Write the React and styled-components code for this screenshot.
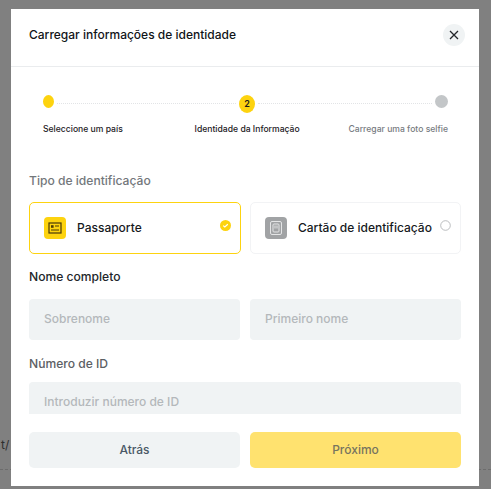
import React from "react";
import styled, { createGlobalStyle } from "styled-components";

const Global = createGlobalStyle`
  html, body { margin: 0; padding: 0; background: #808080; }
  body { font-family: Inter, "Liberation Sans", sans-serif; }
`;

const Page = styled.div`
  position: relative;
  width: 491px;
  height: 489px;
  overflow: hidden;
  background: #808080;
`;
const BehindText = styled.div`
  padding: 437px 0 0 1px;
  font-size: 12px;
  line-height: 16px;
  color: #2e2e2e;
`;
const BehindRule = styled.div`
  margin-top: 16px;
  border-top: 1px dashed #6c6c6c;
`;
const Modal = styled.div`
  position: absolute;
  left: 11px;
  top: 9px;
  width: 468px;
  height: 477px;
  display: flex;
  flex-direction: column;
  background: #fff;
`;
const Header = styled.header`
  height: 58px;
  flex: none;
  box-sizing: border-box;
  display: flex;
  align-items: center;
  justify-content: space-between;
  padding: 0 14px 0 18px;
  border-bottom: 1px solid #eaecee;
`;
const Title = styled.h1`
  margin: 0 0 6px;
  font-size: 12px;
  line-height: 18px;
  font-weight: 500;
  color: #111418;
`;
const CloseButton = styled.button`
  width: 22px;
  height: 22px;
  padding: 0;
  border: 0;
  border-radius: 50%;
  background: #f0f3f4;
  display: flex;
  align-items: center;
  justify-content: center;
  margin-bottom: 5px;
`;
const Body = styled.div`
  height: 347px;
  flex: none;
  overflow: hidden;
  padding: 0 18px;
`;
const Stepper = styled.div`
  height: 79px;
  padding: 28px 13px 0 14px;
  box-sizing: border-box;
`;
const Track = styled.div`
  display: flex;
  align-items: flex-start;
  height: 18px;
`;
const Dot = styled.span`
  flex: none;
  width: ${(p) => p.$w}px;
  height: ${(p) => p.$h}px;
  border-radius: 50%;
  background: ${(p) => p.$color};
  color: #1b1b1b;
  font-size: 9px;
  font-weight: 600;
  line-height: 18px;
  text-align: center;
`;
const Connector = styled.span`
  flex: none;
  width: ${(p) => p.$w}px;
  margin: 8px 3px 0;
  border-top: 1px dotted #e2e4e6;
`;
const StepLabels = styled.div`
  display: flex;
  justify-content: space-between;
  margin-top: 10px;
  font-size: 8.6px;
  line-height: 12px;
  font-weight: 500;
`;
const StepLabel = styled.span`
  color: ${(p) => (p.$muted ? "#777b7f" : "#1d2024")};
  margin-left: ${(p) => p.$shift || 0}px;
`;
const SectionLabel = styled.div`
  font-size: 12.1px;
  line-height: 16px;
  font-weight: 500;
  color: ${(p) => p.$color};
  margin: ${(p) => p.$margin};
`;
const CardRow = styled.div`
  display: grid;
  grid-template-columns: 212px 211px;
  gap: 9px;
`;
const Card = styled.div`
  position: relative;
  box-sizing: border-box;
  height: 52px;
  border-radius: 5px;
  border: 1px solid ${(p) => (p.$active ? "#fdd30f" : "#f2f3f5")};
  display: flex;
  align-items: center;
  gap: ${(p) => p.$gap}px;
  padding-left: 14px;
  font-size: 12px;
  font-weight: 500;
  color: #16191d;
  white-space: nowrap;
`;
const CardText = styled.span`
  margin-bottom: 2px;
`;
const CardIcon = styled.span`
  flex: none;
  width: 22px;
  height: 22px;
  border-radius: 4px;
  background: ${(p) => p.$color};
  display: flex;
  align-items: center;
  justify-content: center;
`;
const Mark = styled.span`
  position: absolute;
  right: ${(p) => p.$right}px;
  top: 17px;
  display: flex;
`;
const FieldRow = styled.div`
  display: grid;
  grid-template-columns: 211px 211px;
  gap: 10px;
`;
const Field = styled.div`
  height: ${(p) => p.$h}px;
  box-sizing: border-box;
  border-radius: 4px;
  background: #f0f3f4;
  padding-left: 15px;
  font-size: 12px;
  font-weight: 500;
  line-height: ${(p) => p.$lh}px;
  color: #b4b8bb;
`;
const Footer = styled.footer`
  display: grid;
  grid-template-columns: 211px 211px;
  gap: 10px;
  padding: 18px 18px 0;
`;
const FooterButton = styled.button`
  height: 36px;
  padding: 0 0 2px;
  border: 0;
  border-radius: 5px;
  font: 500 12px Inter, "Liberation Sans", sans-serif;
  background: ${(p) => (p.$primary ? "#ffe26f" : "#f0f3f4")};
  color: ${(p) => (p.$primary ? "#77745f" : "#4a5866")};
`;

export default function App() {
  return (
    <Page>
      <Global />
      <BehindText>t/</BehindText>
      <BehindRule />
      <Modal>
        <Header>
          <Title>Carregar informações de identidade</Title>
          <CloseButton aria-label="Fechar">
            <svg width="10" height="10" viewBox="0 0 10 10" fill="none" stroke="#23262a" strokeWidth="1.3">
              <path d="M1 1l8 8M9 1L1 9" />
            </svg>
          </CloseButton>
        </Header>
        <Body>
          <Stepper>
            <Track>
              <Dot $w={11} $h={13} $color="#fdd30f" />
              <Connector $w={179} />
              <Dot $w={16} $h={18} $color="#fdd30f">2</Dot>
              <Connector $w={174} />
              <Dot $w={13} $h={13} $color="#c3c6c8" />
            </Track>
            <StepLabels>
              <StepLabel>Seleccione um país</StepLabel>
              <StepLabel $shift={23}>Identidade da Informação</StepLabel>
              <StepLabel $muted>Carregar uma foto selfie</StepLabel>
            </StepLabels>
          </Stepper>
          <SectionLabel $color="#73777b" $margin="27px 0 13px">Tipo de identificação</SectionLabel>
          <CardRow>
            <Card $active $gap={11}>
              <CardIcon $color="#fdd30f">
                <svg width="14" height="12" viewBox="0 0 14 12" fill="none" stroke="#4a3a08" strokeWidth="1.2">
                  <rect x="1" y="1" width="12" height="10" />
                  <rect x="3" y="3.2" width="2.6" height="2.6" fill="#4a3a08" stroke="none" />
                  <path d="M7 4h4M3 8h8" />
                </svg>
              </CardIcon>
              <CardText>Passaporte</CardText>
              <Mark $right={9}>
                <svg width="11" height="11" viewBox="0 0 11 11">
                  <circle cx="5.5" cy="5.5" r="5.5" fill="#fdd30f" />
                  <path d="M3.2 5.6l1.6 1.4 3-2.7" fill="none" stroke="#fff" strokeWidth="1.2" />
                </svg>
              </Mark>
            </Card>
            <Card $gap={11}>
              <CardIcon $color="#a1a3a5">
                <svg width="14" height="16" viewBox="0 0 14 16" fill="none" stroke="#e4e5e6" strokeWidth="1">
                  <rect x="1.5" y="1.5" width="11" height="13" rx="1.5" />
                  <rect x="4" y="4" width="6" height="8" rx="1" />
                  <path d="M6 5.5v3M8 5.5v3" />
                </svg>
              </CardIcon>
              <CardText>Cartão de identificação</CardText>
              <Mark $right={9}>
                <svg width="11" height="11" viewBox="0 0 11 11">
                  <circle cx="5.5" cy="5.5" r="4.8" fill="#fff" stroke="#a9acae" strokeWidth="0.8" />
                </svg>
              </Mark>
            </Card>
          </CardRow>
          <SectionLabel $color="#22262a" $margin="15px 0 14px">Nome completo</SectionLabel>
          <FieldRow>
            <Field $h={41} $lh={39}>Sobrenome</Field>
            <Field $h={41} $lh={39}>Primeiro nome</Field>
          </FieldRow>
          <SectionLabel $color="#5c6064" $margin="16px 0 10px">Número de ID</SectionLabel>
          <Field $h={41} $lh={39}>Introduzir número de ID</Field>
        </Body>
        <Footer>
          <FooterButton>Atrás</FooterButton>
          <FooterButton $primary>Próximo</FooterButton>
        </Footer>
      </Modal>
    </Page>
  );
}
